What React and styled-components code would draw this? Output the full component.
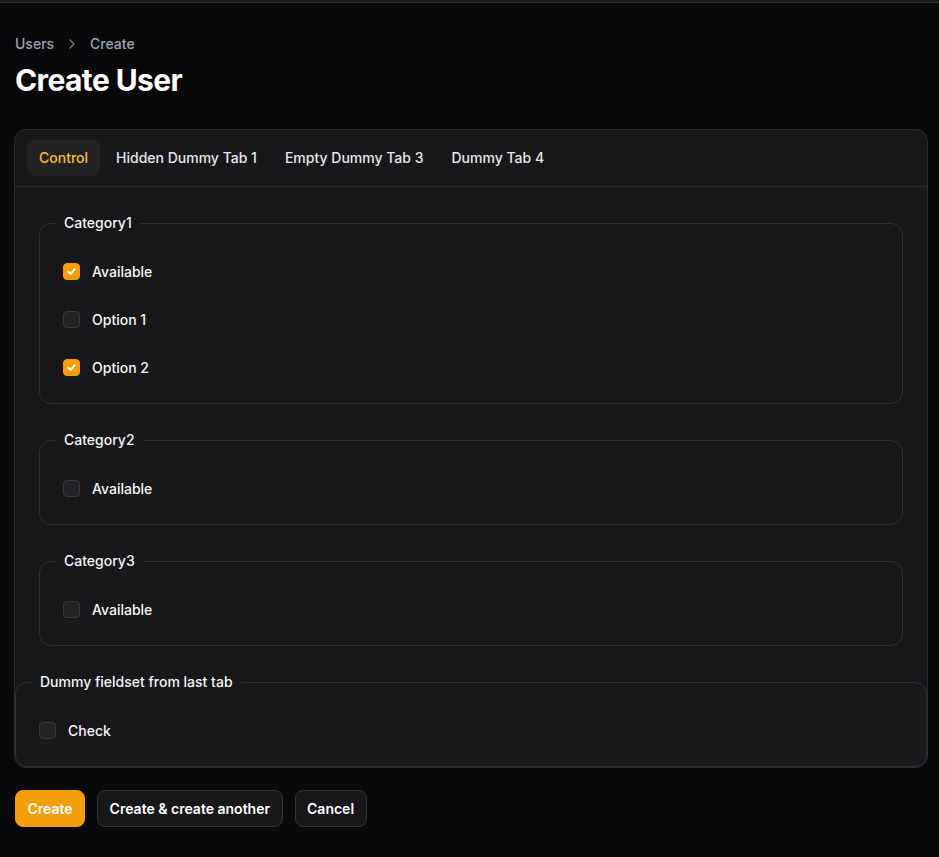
import React from 'react';
import styled, { createGlobalStyle } from 'styled-components';

const GlobalStyle = createGlobalStyle`
  html, body {
    margin: 0;
    background: #09090b;
    font-family: Inter, "Noto Sans", sans-serif;
    color: #fff;
  }
  * { box-sizing: border-box; }
`

const TopBar = styled.div`
  height: 3px;
  background: #18181b;
  border-bottom: 1px solid #2a2a2e;
`

const Page = styled.div`
  padding: 31px 11px 30px 15px;
`

const Breadcrumbs = styled.nav`
  display: flex;
  align-items: center;
  gap: 8px;
  font-size: 14px;
  font-weight: 500;
  line-height: 20px;
  color: #9ca3af;
`

const Title = styled.h1`
  margin: 8px 0 0;
  font-size: 30px;
  line-height: 36px;
  font-weight: 700;
  letter-spacing: -0.6px;
`

const Card = styled.div`
  margin-top: 31px;
  margin-left: -1px;
  background: #18181b;
  border: 1px solid #2a2a2e;
  border-radius: 12px;
  overflow: hidden;
`

const TabBar = styled.div`
  display: flex;
  gap: 4px;
  padding: 10px 12px;
  border-bottom: 1px solid #2a2a2e;
`

const Tab = styled.button`
  height: 36px;
  padding: 0 12px 1px;
  border: none;
  border-radius: 8px;
  font-family: inherit;
  font-size: 14px;
  font-weight: 500;
  background: ${p => (p.$active ? '#222225' : 'transparent')};
  color: ${p => (p.$active ? '#fbbf24' : '#e5e7eb')};
`

const Panel = styled.div`
  display: flex;
  flex-direction: column;
  gap: 24px;
  padding: 24px;
`

const Fieldset = styled.fieldset`
  margin: 0;
  padding: 24px;
  border: 1px solid #2e2e33;
  border-radius: 12px;
  display: flex;
  flex-direction: column;
  gap: 24px;
  min-width: 0;
`

const Legend = styled.legend`
  margin-left: -8px;
  padding: 0 8px;
  font-size: 14px;
  font-weight: 500;
  line-height: 24px;
  color: #f4f4f5;
`

const Row = styled.label`
  display: flex;
  align-items: center;
  gap: 12px;
  height: 24px;
  font-size: 14px;
  font-weight: 500;
  color: #f4f4f5;
`

const Box = styled.span`
  width: 17px;
  height: 17px;
  margin-left: -1px;
  border-radius: 4px;
  display: flex;
  align-items: center;
  justify-content: center;
  background: ${p => (p.$checked ? '#f59e0b' : '#232326')};
  border: 1px solid ${p => (p.$checked ? '#f59e0b' : '#38383d')};
`

const Actions = styled.div`
  display: flex;
  gap: 12px;
  margin-top: 22px;
`

const Button = styled.button`
  height: 37px;
  padding: 0 11.5px;
  border-radius: 8px;
  font-family: inherit;
  font-size: 14px;
  font-weight: 600;
  color: #fff;
  background: ${p => (p.$primary ? '#f59e0b' : '#18181b')};
  border: 1px solid ${p => (p.$primary ? '#f59e0b' : '#333338')};
`

function Chevron() {
  return (
    <svg width="20" height="20" viewBox="0 0 20 20" fill="none" stroke="#71717a" strokeWidth="1.5">
      <path d="M8 6l4 4-4 4" strokeLinecap="round" strokeLinejoin="round" />
    </svg>
  );
}

function Checkbox({ checked, label }) {
  return (
    <Row>
      <Box $checked={checked}>
        {checked && (
          <svg width="11" height="11" viewBox="0 0 12 12" fill="none" stroke="#fff" strokeWidth="2">
            <path d="M2.5 6.3 5 8.6 9.5 3.5" strokeLinecap="round" strokeLinejoin="round" />
          </svg>
        )}
      </Box>
      {label}
    </Row>
  );
}

const tabs = ['Control', 'Hidden Dummy Tab 1', 'Empty Dummy Tab 3', 'Dummy Tab 4'];

export default function App() {
  return (
    <>
      <GlobalStyle />
      <TopBar />
      <Page>
        <Breadcrumbs>
          <span>Users</span>
          <Chevron />
          <span>Create</span>
        </Breadcrumbs>
        <Title>Create User</Title>
        <Card>
          <TabBar>
            {tabs.map((t, i) => (
              <Tab key={t} $active={i === 0}>{t}</Tab>
            ))}
          </TabBar>
          <Panel>
            <Fieldset>
              <Legend>Category1</Legend>
              <Checkbox checked label="Available" />
              <Checkbox label="Option 1" />
              <Checkbox checked label="Option 2" />
            </Fieldset>
            <Fieldset>
              <Legend>Category2</Legend>
              <Checkbox label="Available" />
            </Fieldset>
            <Fieldset>
              <Legend>Category3</Legend>
              <Checkbox label="Available" />
            </Fieldset>
          </Panel>
          <Fieldset>
            <Legend>Dummy fieldset from last tab</Legend>
            <Checkbox label="Check" />
          </Fieldset>
        </Card>
        <Actions>
          <Button $primary>Create</Button>
          <Button>Create &amp; create another</Button>
          <Button>Cancel</Button>
        </Actions>
      </Page>
    </>
  );
}
